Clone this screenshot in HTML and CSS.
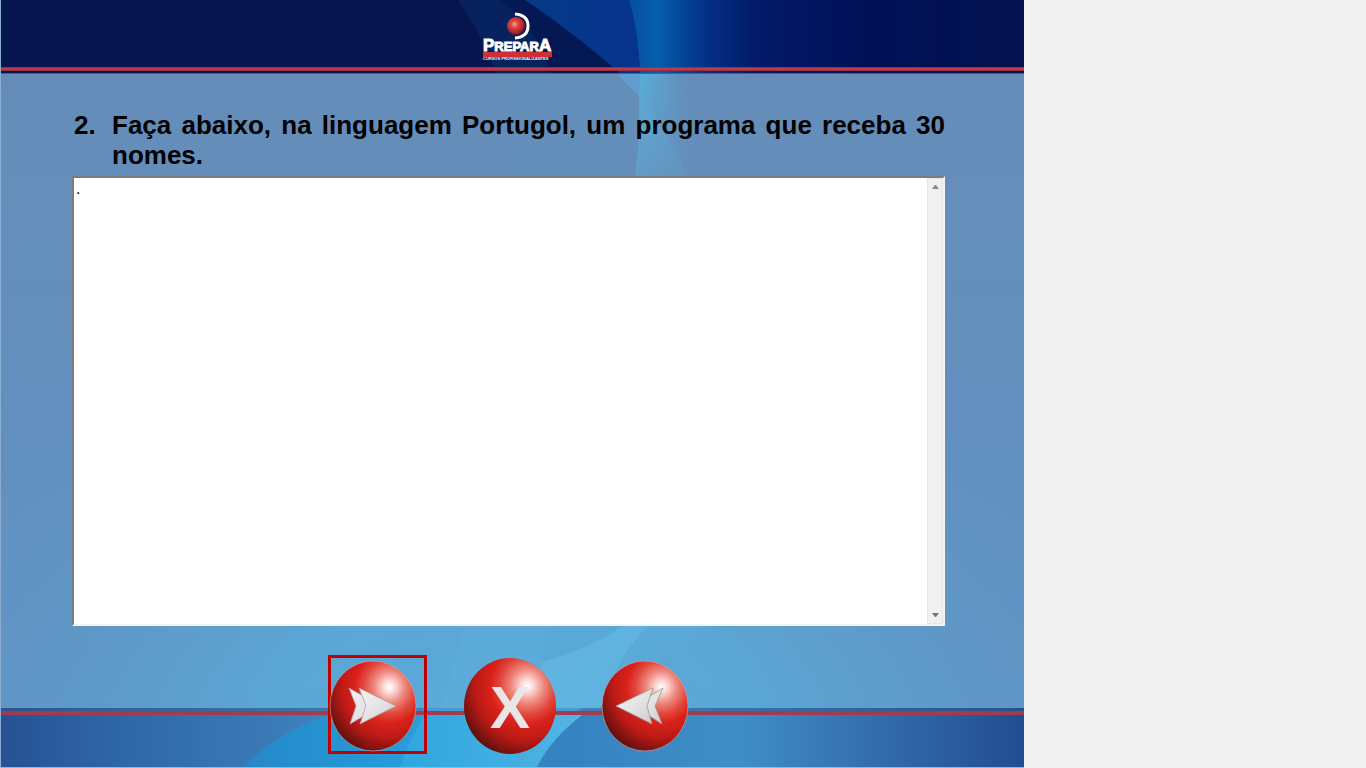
FILE: index.html
```html
<!DOCTYPE html>
<html lang="pt-BR">
<head>
<meta charset="utf-8">
<meta name="viewport" content="width=device-width, initial-scale=1">
<title>Prepara - Exercício 2</title>
<link rel="stylesheet" href="styles.css">
</head>
<body>
<div class="slide">
  <svg class="backdrop" viewBox="0 0 1024 768" preserveAspectRatio="none" aria-hidden="true">
    <defs>
      <linearGradient id="mid" x1="0" y1="0" x2="0" y2="1">
        <stop offset="0" stop-color="#668cb8"/><stop offset=".45" stop-color="#638fbd"/><stop offset="1" stop-color="#6093c4"/>
      </linearGradient>
      <radialGradient id="glow" gradientUnits="userSpaceOnUse" cx="0" cy="0" r="1" gradientTransform="translate(512 740) scale(640 420)">
        <stop offset="0" stop-color="#5aacdb"/><stop offset=".4" stop-color="#5aa8d6" stop-opacity=".9"/><stop offset="1" stop-color="#5f98c8" stop-opacity="0"/>
      </radialGradient>
      <linearGradient id="ray" gradientUnits="userSpaceOnUse" x1="630" y1="0" x2="1024" y2="0">
        <stop offset="0" stop-color="#0450a0"/><stop offset=".07" stop-color="#0660ad"/><stop offset=".13" stop-color="#044799"/><stop offset=".2" stop-color="#032f84"/><stop offset=".32" stop-color="#021a68"/><stop offset=".6" stop-color="#021058"/><stop offset="1" stop-color="#03124f"/>
      </linearGradient>
      <linearGradient id="blue" x1="0" y1="0" x2="1" y2="0">
        <stop offset="0" stop-color="#073a86"/><stop offset="1" stop-color="#06338f"/>
      </linearGradient>
      <linearGradient id="haze" gradientUnits="userSpaceOnUse" x1="636" y1="0" x2="700" y2="0">
        <stop offset="0" stop-color="#55b4dc" stop-opacity=".95"/><stop offset=".5" stop-color="#5ba4d0" stop-opacity=".6"/><stop offset="1" stop-color="#668cb8" stop-opacity="0"/>
      </linearGradient>
      <linearGradient id="beam" gradientUnits="userSpaceOnUse" x1="634" y1="0" x2="690" y2="0">
        <stop offset="0" stop-color="#5fb1d8"/><stop offset="1" stop-color="#6299c8"/>
      </linearGradient>
      <linearGradient id="fade" x1="0" y1="0" x2="0" y2="1">
        <stop offset="0" stop-color="#fff"/><stop offset="1" stop-color="#fff" stop-opacity=".3"/>
      </linearGradient>
      <mask id="fademask"><rect x="500" y="73" width="300" height="120" fill="url(#fade)"/></mask>
      <linearGradient id="foot" x1="0" y1="0" x2="1" y2="0">
        <stop offset="0" stop-color="#265294"/><stop offset=".12" stop-color="#2f67a8"/><stop offset=".32" stop-color="#3e82bd"/><stop offset=".5" stop-color="#3580c0"/><stop offset=".6" stop-color="#3985c2"/><stop offset=".72" stop-color="#3f8fc7"/><stop offset=".82" stop-color="#3775b4"/><stop offset="1" stop-color="#224c90"/>
      </linearGradient>
      <linearGradient id="wave" x1="0" y1="0" x2="1" y2="0">
        <stop offset="0" stop-color="#2588c8"/><stop offset=".5" stop-color="#279dd9"/><stop offset="1" stop-color="#56b6e4"/>
      </linearGradient>
      <linearGradient id="edge" x1="0" y1="0" x2="1" y2="0">
        <stop offset="0" stop-color="#2b5590"/><stop offset=".5" stop-color="#4488bd"/><stop offset="1" stop-color="#28518f"/>
      </linearGradient>
    </defs>
    <rect width="1024" height="768" fill="url(#mid)"/>
    <rect y="320" width="1024" height="448" fill="url(#glow)"/>

    <rect width="1024" height="74" fill="#06154d"/>
    <path d="M458 0H525Q570 30 621 74H496Q485 40 458 0Z" fill="#06225f"/>
    <path d="M500 0H525Q570 30 621 74H550Q540 30 500 0Z" fill="#04164f" opacity=".7"/>
    <path d="M525 0H629Q638 30 640 74H621Q570 30 525 0Z" fill="url(#blue)"/>
    <path d="M629 0H1024V74H640Q638 30 629 0Z" fill="url(#ray)"/>

    <path d="M496 74Q510 120 510 177H690Q660 115 617 74Z" fill="#6491bb" opacity=".4"/>
    <g mask="url(#fademask)">
      <path d="M617 74H640V97Z" fill="#5f9fce"/>
      <path d="M640 74H705V177H688Q663 125 639 97Z" fill="url(#haze)"/>
      <path d="M639 97Q663 125 688 177H635Q640 138 639 97Z" fill="url(#beam)"/>
    </g>

    <path d="M440 708Q455 670 463 620H550Q545 675 530 712Z" fill="#60aedc" opacity=".45"/>
    <path d="M548 625H650Q620 650 600 708H530Q545 660 548 625Z" fill="#64b8e2" opacity=".7"/>
    <path d="M650 625H710Q670 645 600 708Q625 650 650 625Z" fill="#5faedb" opacity=".3"/>
    <path d="M548 625H625Q590 648 542 662Z" fill="#519fce" opacity=".5"/>

    <rect y="715" width="1024" height="52" fill="url(#foot)"/>
    <path d="M244 767Q275 733 330 715H582Q550 740 537 767Z" fill="url(#wave)"/>
    <path d="M400 767Q410 738 425 715H540Q530 745 510 767Z" fill="#40b1e5" opacity=".5"/>
    <rect y="708" width="1024" height="4" fill="url(#edge)"/>
    <path d="M425 708H582L576 712H420Z" fill="#459ccf"/>
    <rect y="711" width="1024" height="4" fill="#9f3d50"/>
    <rect y="67" width="1024" height="4" fill="#a02c42"/>
    <rect y="68" width="1024" height="2" fill="#b93c46"/>
    <rect y="73" width="1024" height="1" fill="#3f609a"/>
    <rect y="767" width="1024" height="1" fill="#8db9de"/>
    <rect width="1" height="768" fill="#8daed3"/>
  </svg>

  <header class="banner">
    <svg class="logo" viewBox="0 0 74 54" role="img" aria-label="Prepara Cursos Profissionalizantes">
      <defs>
        <radialGradient id="sphere" cx=".42" cy=".4" r=".62">
          <stop offset="0" stop-color="#f7a99b"/><stop offset=".3" stop-color="#df4b40"/><stop offset=".75" stop-color="#b5222a"/><stop offset="1" stop-color="#651234"/>
        </radialGradient>
      </defs>
      <path d="M34 4Q47 5 47 16T34 28" fill="none" stroke="#fff" stroke-width="3"/>
      <circle cx="35" cy="16" r="9" fill="url(#sphere)"/>
      <rect x="2" y="42" width="69" height="5" fill="#cf2e35"/>
      <text x="2" y="41" class="logo-name">P<tspan class="logo-small">REPAR</tspan>A</text>
      <text x="2" y="50" class="logo-tag">CURSOS PROFISSIONALIZANTES</text>
    </svg>
  </header>

  <main class="content">
    <h1 class="question"><span>2.</span><label for="answer">Faça abaixo, na linguagem Portugol, um programa que receba 30 nomes.</label></h1>
    <div class="editor">
      <textarea id="answer" class="answer" spellcheck="false">.</textarea>
      <div class="scroll">
        <button type="button" class="scroll-button" aria-label="Rolar para cima"><svg viewBox="0 0 7 4"><path d="M3 0H4L7 4H0Z" fill="#888"/></svg></button>
        <button type="button" class="scroll-button" aria-label="Rolar para baixo"><svg viewBox="0 0 7 4"><path d="M0 0H7L4 4H3Z" fill="#777"/></svg></button>
      </div>
    </div>
  </main>

  <nav class="controls" aria-label="Navegação">
    <button type="button" class="ball ball-active" aria-label="Avançar">
      <svg viewBox="0 0 93 93">
        <defs>
          <radialGradient id="red" cx=".69" cy=".29" r=".88">
            <stop offset="0" stop-color="#fff"/><stop offset=".07" stop-color="#fbdcd8"/><stop offset=".2" stop-color="#ee8a80"/><stop offset=".34" stop-color="#e2473c"/><stop offset=".46" stop-color="#d9211a"/><stop offset=".64" stop-color="#bd1a16"/><stop offset=".8" stop-color="#801410"/><stop offset="1" stop-color="#2c0f0b"/>
          </radialGradient>
          <linearGradient id="silver" x1="0" y1="0" x2="1" y2="1">
            <stop offset="0" stop-color="#f5f5f5"/><stop offset=".55" stop-color="#e2e2e2"/><stop offset="1" stop-color="#cacaca"/>
          </linearGradient>
        </defs>
        <ellipse cx="42" cy="48" rx="43" ry="45" fill="url(#red)" stroke="#d0a8ae" stroke-width=".6"/>
        <path d="M18 30L50 48L19 66L25 48Z" fill="url(#silver)" stroke="#b09a9a" stroke-width=".8"/>
        <path d="M28 30L65 48L29 66L35 48Z" fill="url(#silver)" stroke="#a8a0a0" stroke-width=".8"/>
      </svg>
    </button>
    <button type="button" class="ball ball-close" aria-label="Fechar">
      <svg viewBox="0 0 93 99">
        <ellipse cx="46" cy="51" rx="46" ry="48" fill="url(#red)"/>
        <text x="46" y="73" class="close-letter">X</text>
      </svg>
    </button>
    <button type="button" class="ball" aria-label="Voltar">
      <svg viewBox="0 0 99 99">
        <ellipse cx="51" cy="51" rx="43" ry="45" fill="url(#red)" stroke="#d0a8ae" stroke-width=".6"/>
        <path d="M69 33L40 51L68 69L61 51Z" fill="url(#silver)" stroke="#999" stroke-width=".8"/>
        <path d="M59 33L22 51L58 69L53 51Z" fill="url(#silver)" stroke="#999" stroke-width=".8"/>
      </svg>
    </button>
  </nav>
</div>
</body>
</html>
```

FILE: styles.css
```css
* { box-sizing: border-box; }

body {
  margin: 0;
  background: #f0f0f0;
  color: #000;
  font-family: "Liberation Sans", Arial, sans-serif;
}

button { font: inherit; cursor: pointer; }

.slide {
  position: relative;
  isolation: isolate;
  display: flex;
  flex-direction: column;
  max-width: 1024px;
  min-height: 100vh;
}

/* Decorative artwork behind the whole slide */
.backdrop {
  position: absolute;
  inset: 0;
  z-index: -1;
  width: 100%;
  height: 100%;
}

.banner {
  display: flex;
  justify-content: center;
  height: 74px;
  padding: 10px 0 10px 12px;
}

.logo {
  width: 74px;
  height: 54px;
}

.logo-name {
  fill: #fff;
  stroke: #fff;
  stroke-width: 1px;
  font-size: 17px;
  font-weight: bold;
}

.logo-small { font-size: 13px; }

.logo-tag {
  fill: #fff;
  font-size: 4px;
  font-weight: bold;
}

.content {
  flex: 1;
  display: flex;
  flex-direction: column;
  gap: 6px;
  padding: 36px 79px 0 72px;
}

.question {
  display: grid;
  grid-template-columns: 38px 1fr;
  margin: 0;
  padding-left: 2px;
  font-size: 26px;
  line-height: 30px;
  text-align: justify;
}

.editor {
  flex: 1;
  display: flex;
  min-height: 200px;
  border: 2px solid;
  border-color: #807c78 #f4f4f4 #f4f4f4 #807c78;
  background: #fff;
}

.answer {
  flex: 1;
  min-width: 0;
  padding: 3px 2px;
  border: 0;
  outline: 0;
  resize: none;
  overflow: hidden;
  background: #fff;
  color: #000;
  font: 16px/16px "Liberation Sans", Arial, sans-serif;
}

.scroll {
  display: flex;
  flex-direction: column;
  justify-content: space-between;
  width: 16px;
  border: 1px solid #e6e6e6;
  background: #f0f0f0;
}

.scroll-button {
  display: grid;
  place-items: center;
  height: 16px;
  padding: 0;
  border: 0;
  background: none;
}

.scroll-button svg {
  width: 7px;
  height: 4px;
}

.controls {
  display: flex;
  justify-content: center;
  gap: 37px;
  padding: 29px 78px 14px 74px;
}

.ball {
  width: 99px;
  height: 99px;
  padding: 0;
  border: 0;
  background: none;
}

.ball svg {
  display: block;
  width: 100%;
  height: 100%;
  overflow: visible;
}

.ball-active { border: 3px solid #c00000; }

.ball-close { width: 93px; }

.close-letter {
  fill: #e8e6e6;
  font-size: 60px;
  font-weight: bold;
  text-anchor: middle;
}
```
